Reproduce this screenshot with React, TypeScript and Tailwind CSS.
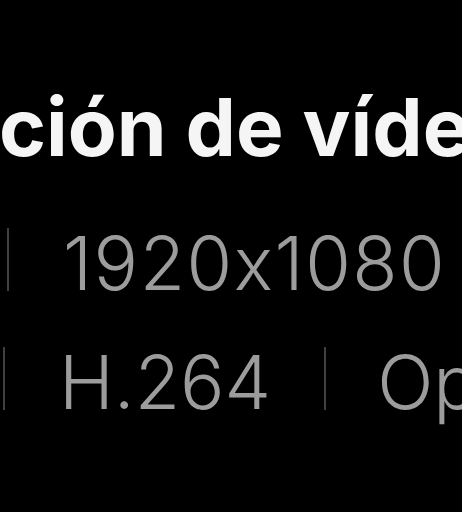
export default function App() {
	return (
		<div className="w-[462px] h-[512px] overflow-hidden bg-black font-['Inter','Noto_Sans',sans-serif] [font-feature-settings:'calt'_0]">
			{/* Titre */}
			<div className="pt-[77px] whitespace-nowrap text-[80px] leading-[100px] font-bold text-[#f5f5f5] -ml-[1px]">
				ción de vídeo
			</div>
			{/* Résolution */}
			<div className="mt-[41px] flex items-start whitespace-nowrap text-[#9c9c9c] text-[74px] font-light leading-[90px]">
				<div className="shrink-0 mt-[10px] ml-[7px] w-[2px] h-[63px] bg-[#404040]" />
				<span className="shrink-0 ml-[54px] tracking-[1.5px]">1920x1080</span>
				<div className="shrink-0 mt-[10px] ml-[55px] w-[2px] h-[63px] bg-[#404040]" />
			</div>
			{/* Codec */}
			<div className="mt-[29px] flex items-start whitespace-nowrap text-[#9c9c9c] text-[74px] font-light leading-[90px]">
				<div className="shrink-0 mt-[10px] ml-[3px] w-[2px] h-[63px] bg-[#404040]" />
				<span className="shrink-0 ml-[54px]">H.264</span>
				<div className="shrink-0 mt-[10px] ml-[53px] w-[2px] h-[63px] bg-[#404040]" />
				<span className="shrink-0 ml-[51px]">Optimizado</span>
			</div>
		</div>
	);
}
